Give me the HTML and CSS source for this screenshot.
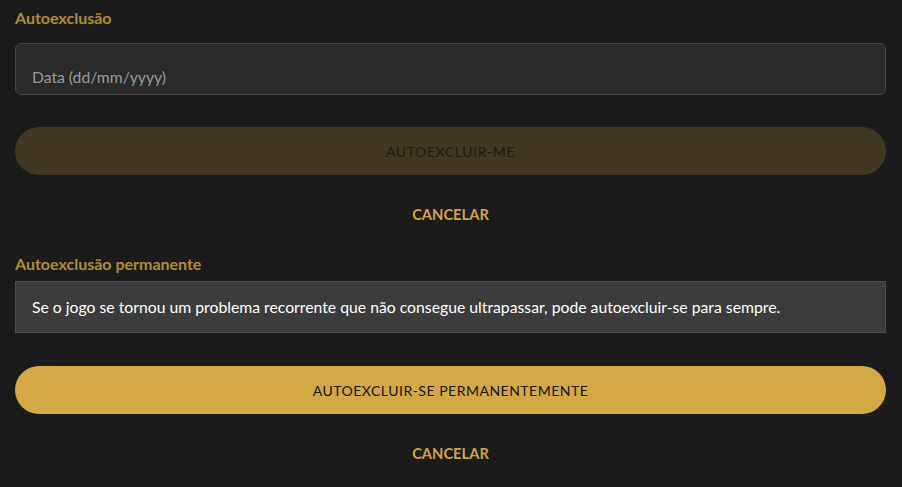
FILE: index.html
```html
<!DOCTYPE html>
<html lang="pt">
<head>
<meta charset="utf-8">
<link rel="stylesheet" href="styles.css">
</head>
<body>
<div class="page">
  <h2 class="title t1">Autoexclusão</h2>
  <div class="field"><span class="placeholder">Data (dd/mm/yyyy)</span></div>
  <button class="btn btn-disabled">AUTOEXCLUIR-ME</button>
  <div class="cancel c1">CANCELAR</div>
  <h2 class="title t2">Autoexclusão permanente</h2>
  <div class="info">Se o jogo se tornou um problema recorrente que não consegue ultrapassar, pode autoexcluir-se para sempre.</div>
  <button class="btn btn-primary">AUTOEXCLUIR-SE PERMANENTEMENTE</button>
  <div class="cancel c2">CANCELAR</div>
</div>
</body>
</html>
```
FILE: styles.css
```css
html, body {
  margin: 0;
  padding: 0;
  background: #1b1b1b;
  font-family: Lato, "Open Sans", sans-serif;
}
.page {
  padding: 0 16px 0 15px;
  display: flex;
  flex-direction: column;
}
.title {
  margin: 0;
  font-size: 16px;
  font-weight: 700;
  color: #b48c30;
  line-height: 20px;
}
.t1 { margin-top: 8px; }
.t2 { margin-top: 31px; }
.field {
  margin-top: 15px;
  height: 52px;
  box-sizing: border-box;
  border: 1px solid #454545;
  border-radius: 6px;
  background: #2a2a2a;
  display: flex;
  align-items: flex-end;
  padding: 0 16px 7px;
}
.placeholder {
  color: #9a9a9a;
  font-size: 15.7px;
  line-height: 20px;
}
.btn {
  border: none;
  height: 48px;
  border-radius: 24px;
  font-family: Lato, "Open Sans", sans-serif;
  font-size: 14px;
  width: 100%;
  padding: 0;
}
.btn-disabled {
  margin-top: 32px;
  background: #3f3722;
  color: #1c1a15;
  letter-spacing: 0.6px;
}
.btn-primary {
  margin-top: 33px;
  background: #d4a843;
  color: #121212;
  letter-spacing: 0.5px;
}
.cancel {
  text-align: center;
  font-size: 14.7px;
  font-weight: 700;
  color: #d1a540;
  line-height: 18px;
}
.c1 { margin-top: 30px; }
.c2 { margin-top: 30px; }
.info {
  margin-top: 7px;
  background: #3c3c3c;
  border: 1px solid #4c4c4c;
  color: #ffffff;
  font-size: 15.75px;
  line-height: 20px;
  padding: 15px 16px;
}
```
